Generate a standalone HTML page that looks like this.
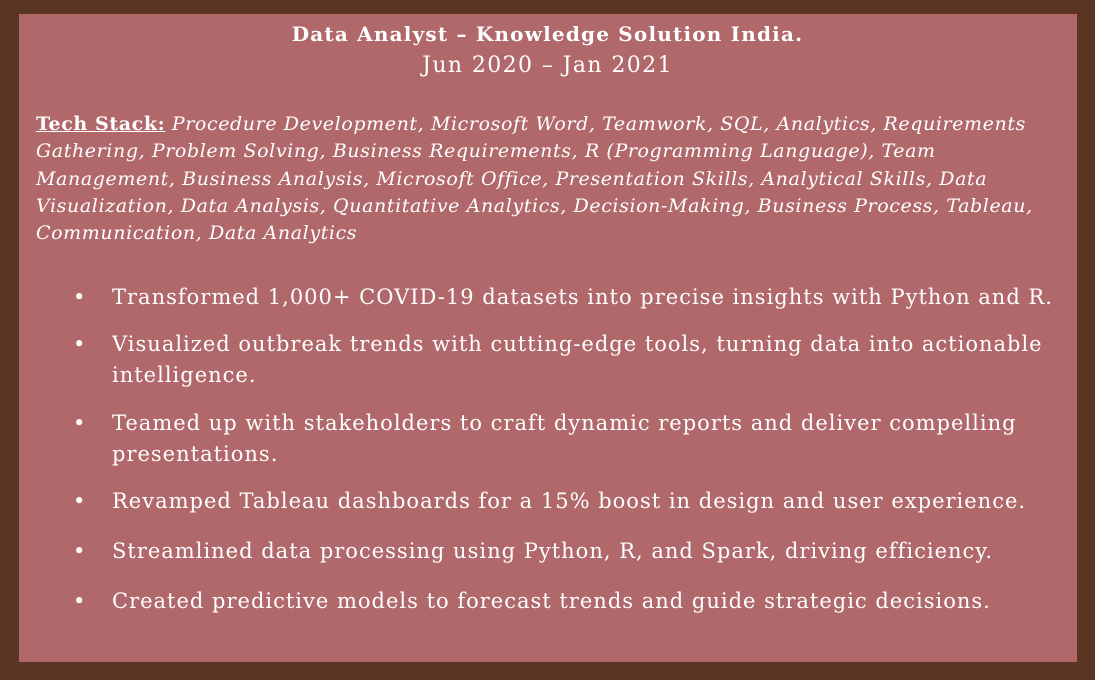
<!DOCTYPE html>
<html><head><meta charset="utf-8"><style>
html,body{margin:0;padding:0;}
body{width:1095px;height:680px;background:#5b3523;position:relative;overflow:hidden;font-family:"DejaVu Serif","Liberation Serif",serif;color:#fff;}
.box{position:absolute;left:19px;top:14px;width:1058px;height:648px;background:#b0686a;}
.l{position:absolute;white-space:nowrap;}
.c{left:0;width:1095px;text-align:center;}
.t{font-size:19px;font-style:italic;left:36px;letter-spacing:0.6px;}
.b{font-size:21px;left:112px;letter-spacing:1px;}
.d{font-size:21px;left:73px;}
</style></head><body>
<div class="box"></div>
<div class="l c" style="top:22px;font-size:20px;font-weight:bold;letter-spacing:1.2px;">Data Analyst – Knowledge Solution India.</div>
<div class="l c" style="top:53px;font-size:22px;letter-spacing:1.4px;">Jun 2020 – Jan 2021</div>
<div class="l t" style="top:113px;"><b style="font-style:normal;text-decoration:underline;">Tech Stack:</b> Procedure Development, Microsoft Word, Teamwork, SQL, Analytics, Requirements</div>
<div class="l t" style="top:140px;">Gathering, Problem Solving, Business Requirements, R (Programming Language), Team</div>
<div class="l t" style="top:168px;">Management, Business Analysis, Microsoft Office, Presentation Skills, Analytical Skills, Data</div>
<div class="l t" style="top:195px;">Visualization, Data Analysis, Quantitative Analytics, Decision-Making, Business Process, Tableau,</div>
<div class="l t" style="top:222px;">Communication, Data Analytics</div>
<div class="l d" style="top:285px;">•</div><div class="l b" style="top:285px;">Transformed 1,000+ COVID-19 datasets into precise insights with Python and R.</div>
<div class="l d" style="top:332px;">•</div><div class="l b" style="top:332px;">Visualized outbreak trends with cutting-edge tools, turning data into actionable</div>
<div class="l b" style="top:363px;">intelligence.</div>
<div class="l d" style="top:411px;">•</div><div class="l b" style="top:411px;">Teamed up with stakeholders to craft dynamic reports and deliver compelling</div>
<div class="l b" style="top:442px;">presentations.</div>
<div class="l d" style="top:489px;">•</div><div class="l b" style="top:489px;">Revamped Tableau dashboards for a 15% boost in design and user experience.</div>
<div class="l d" style="top:539px;">•</div><div class="l b" style="top:539px;">Streamlined data processing using Python, R, and Spark, driving efficiency.</div>
<div class="l d" style="top:589px;">•</div><div class="l b" style="top:589px;">Created predictive models to forecast trends and guide strategic decisions.</div>
</body></html>
